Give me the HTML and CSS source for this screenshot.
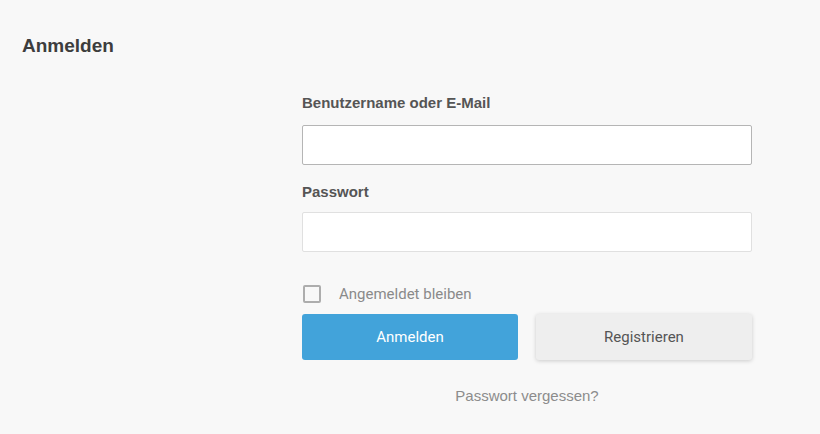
FILE: index.html
```html
<!DOCTYPE html>
<html lang="de">
<head>
<meta charset="utf-8">
<title>Anmelden</title>
<link rel="stylesheet" href="styles.css">
</head>
<body>
<div class="page">
  <h1 class="title">Anmelden</h1>
  <form class="form">
    <label class="label" for="user">Benutzername oder E-Mail</label>
    <input class="input input-active" id="user" type="text">
    <label class="label label-pw" for="pw">Passwort</label>
    <input class="input" id="pw" type="password">
    <label class="remember">
      <span class="checkbox"></span>
      <span class="remember-text">Angemeldet bleiben</span>
    </label>
    <div class="buttons">
      <button type="button" class="btn btn-primary">Anmelden</button>
      <button type="button" class="btn btn-secondary">Registrieren</button>
    </div>
    <a class="forgot" href="#">Passwort vergessen?</a>
  </form>
</div>
</body>
</html>
```

FILE: styles.css
```css
html, body {
  margin: 0;
  padding: 0;
  background: #f8f8f8;
}
body {
  font-family: "Liberation Sans", Arial, sans-serif;
  color: #444;
}
.page {
  width: 820px;
  height: 434px;
  box-sizing: border-box;
  padding: 34px 0 0 22px;
}
.title {
  margin: 0;
  font-size: 19px;
  font-weight: bold;
  color: #3d3d3d;
  line-height: 24px;
}
.form {
  margin-left: 280px;
  margin-top: 35px;
  width: 450px;
  display: flex;
  flex-direction: column;
}
.label {
  font-size: 15px;
  font-weight: bold;
  color: #555;
  line-height: 20px;
  margin-bottom: 12px;
}
.label-pw {
  margin-top: 17px;
  margin-bottom: 10px;
}
.input {
  box-sizing: border-box;
  width: 450px;
  height: 40px;
  border: 1px solid #e0e0e0;
  border-radius: 2px;
  background: #fff;
  margin: 0;
  outline: none;
}
.input-active {
  border-color: #b5b5b5;
}
.remember {
  display: flex;
  align-items: center;
  margin-top: 32px;
  height: 20px;
}
.checkbox {
  box-sizing: border-box;
  width: 18px;
  height: 18px;
  border: 2px solid #adadad;
  border-radius: 2px;
  margin-left: 1px;
}
.remember-text {
  margin-left: 18px;
  font-family: Roboto, "Liberation Sans", sans-serif;
  font-size: 15px;
  color: #8a8a8a;
}
.buttons {
  display: flex;
  gap: 18px;
  margin-top: 10px;
}
.btn {
  width: 216px;
  height: 46px;
  border: none;
  border-radius: 3px;
  font-family: Roboto, "Liberation Sans", sans-serif;
  font-size: 15px;
  padding: 0;
}
.btn-primary {
  background: #42a3da;
  color: #fff;
}
.btn-secondary {
  background: #eeeeee;
  color: #555;
  box-shadow: 0 1px 4px rgba(0,0,0,0.18);
}
.forgot {
  align-self: center;
  margin-top: 27px;
  font-family: "Liberation Sans", Arial, sans-serif;
  font-size: 15px;
  color: #8c8c8c;
  text-decoration: none;
}
```
